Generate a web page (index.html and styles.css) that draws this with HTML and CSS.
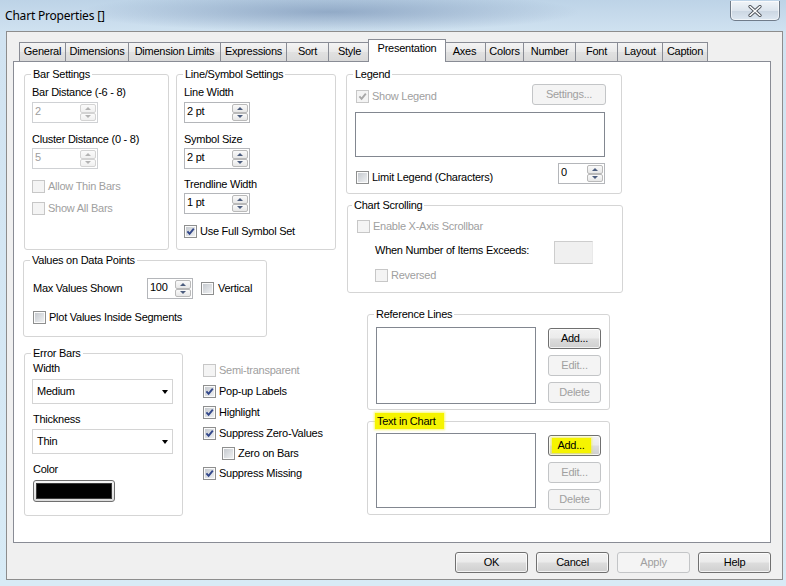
FILE: index.html
```html
<!DOCTYPE html>
<html>
<head>
<meta charset="utf-8">
<title>Chart Properties</title>
<link rel="stylesheet" href="styles.css">
</head>
<body>
<div class="window">
  <div class="titlebar">
    <span class="title">Chart Properties []</span>
    <div class="close">
      <svg width="14" height="12" viewBox="0 0 14 12"><path d="M2 1.5 L12 10.5 M12 1.5 L2 10.5" stroke="#4a4f57" stroke-width="3.2" stroke-linecap="round" fill="none"/><path d="M2 1.5 L12 10.5 M12 1.5 L2 10.5" stroke="#ffffff" stroke-width="1.6" stroke-linecap="round" fill="none"/></svg>
    </div>
  </div>
  <div class="client">
    <div class="tabs">
      <div class="tab t-general">General</div>
      <div class="tab t-dimensions">Dimensions</div>
      <div class="tab t-limits">Dimension Limits</div>
      <div class="tab t-expressions">Expressions</div>
      <div class="tab t-sort">Sort</div>
      <div class="tab t-style">Style</div>
      <div class="tab active">Presentation</div>
      <div class="tab t-axes">Axes</div>
      <div class="tab t-colors">Colors</div>
      <div class="tab t-number">Number</div>
      <div class="tab t-font">Font</div>
      <div class="tab t-layout">Layout</div>
      <div class="tab t-caption">Caption</div>
    </div>
    <div class="panel">
      <div class="col-left">
        <div class="row-top">
          <div class="group g-bar">
            <div class="gtitle">Bar Settings</div>
            <div class="lbl first">Bar Distance (-6 - 8)</div>
            <div class="spin dis w66 s-first"><span class="val">2</span><span class="arr"><i class="up"></i><i class="dn"></i></span></div>
            <div class="lbl second">Cluster Distance (0 - 8)</div>
            <div class="spin dis w66 s-next"><span class="val">5</span><span class="arr"><i class="up"></i><i class="dn"></i></span></div>
            <div class="cb dis after-spin"><span class="box"></span>Allow Thin Bars</div>
            <div class="cb dis next-cb"><span class="box"></span>Show All Bars</div>
          </div>
          <div class="group g-line">
            <div class="gtitle">Line/Symbol Settings</div>
            <div class="lbl first">Line Width</div>
            <div class="spin w66 s-first"><span class="val">2 pt</span><span class="arr"><i class="up"></i><i class="dn"></i></span></div>
            <div class="lbl second">Symbol Size</div>
            <div class="spin w66 s-next"><span class="val">2 pt</span><span class="arr"><i class="up"></i><i class="dn"></i></span></div>
            <div class="lbl third">Trendline Width</div>
            <div class="spin w66 s-next"><span class="val">1 pt</span><span class="arr"><i class="up"></i><i class="dn"></i></span></div>
            <div class="cb after-spin"><span class="box"><svg viewBox="0 0 9 9"><path d="M1.4 4.3 L3.6 6.8 L7.8 1.6" /></svg></span>Use Full Symbol Set</div>
          </div>
        </div>
        <div class="group g-values">
          <div class="gtitle">Values on Data Points</div>
          <div class="max-row">
            <span class="max-lbl">Max Values Shown</span>
            <div class="spin w46"><span class="val">100</span><span class="arr"><i class="up"></i><i class="dn"></i></span></div>
            <div class="cb vert"><span class="box"></span>Vertical</div>
          </div>
          <div class="cb plot"><span class="box"></span>Plot Values Inside Segments</div>
        </div>
        <div class="row-bottom">
          <div class="group g-error">
            <div class="gtitle">Error Bars</div>
            <div class="lbl e-width">Width</div>
            <div class="combo c-first">Medium</div>
            <div class="lbl e-next">Thickness</div>
            <div class="combo c-next">Thin</div>
            <div class="lbl e-next">Color</div>
            <div class="colorbtn"><span></span></div>
          </div>
          <div class="checklist">
            <div class="cb dis"><span class="box"></span>Semi-transparent</div>
            <div class="cb"><span class="box"><svg viewBox="0 0 9 9"><path d="M1.4 4.3 L3.6 6.8 L7.8 1.6" /></svg></span>Pop-up Labels</div>
            <div class="cb"><span class="box"><svg viewBox="0 0 9 9"><path d="M1.4 4.3 L3.6 6.8 L7.8 1.6" /></svg></span>Highlight</div>
            <div class="cb"><span class="box"><svg viewBox="0 0 9 9"><path d="M1.4 4.3 L3.6 6.8 L7.8 1.6" /></svg></span>Suppress Zero-Values</div>
            <div class="cb indent"><span class="box"></span>Zero on Bars</div>
            <div class="cb"><span class="box"><svg viewBox="0 0 9 9"><path d="M1.4 4.3 L3.6 6.8 L7.8 1.6" /></svg></span>Suppress Missing</div>
          </div>
        </div>
      </div>
      <div class="col-right">
        <div class="group g-legend">
          <div class="gtitle">Legend</div>
          <div class="legend-top">
            <div class="cb dis show-legend"><span class="box"><svg viewBox="0 0 9 9"><path d="M1.4 4.3 L3.6 6.8 L7.8 1.6" /></svg></span>Show Legend</div>
            <button class="btn dis settings">Settings...</button>
          </div>
          <div class="listbox legend-list"></div>
          <div class="legend-bottom">
            <div class="cb limit"><span class="box"></span>Limit Legend (Characters)</div>
            <div class="spin w47"><span class="val">0</span><span class="arr"><i class="up"></i><i class="dn"></i></span></div>
          </div>
        </div>
        <div class="group g-scroll">
          <div class="gtitle">Chart Scrolling</div>
          <div class="cb dis enable-scroll"><span class="box"></span>Enable X-Axis Scrollbar</div>
          <div class="items-row">
            <span class="items-lbl">When Number of Items Exceeds:</span>
            <div class="textbox dis"></div>
          </div>
          <div class="cb dis reversed"><span class="box"></span>Reversed</div>
        </div>
        <div class="group g-ref">
          <div class="gtitle">Reference Lines</div>
          <div class="list-row">
            <div class="listbox ref-list"></div>
            <div class="btncol">
              <button class="btn">Add...</button>
              <button class="btn dis">Edit...</button>
              <button class="btn dis">Delete</button>
            </div>
          </div>
        </div>
        <div class="group g-text">
          <div class="gtitle marked">Text in Chart</div>
          <div class="list-row">
            <div class="listbox text-list"></div>
            <div class="btncol">
              <button class="btn"><span class="hl">Add...</span></button>
              <button class="btn dis">Edit...</button>
              <button class="btn dis">Delete</button>
            </div>
          </div>
        </div>
      </div>
    </div>
    <div class="dlg-buttons">
      <button class="btn dlg">OK</button>
      <button class="btn dlg">Cancel</button>
      <button class="btn dlg dis">Apply</button>
      <button class="btn dlg">Help</button>
    </div>
  </div>
</div>
</body>
</html>
```

FILE: styles.css
```css
* { box-sizing: border-box; }
html, body { margin: 0; padding: 0; }
body {
  width: 786px;
  height: 586px;
  overflow: hidden;
  font-family: "Liberation Sans", Arial, sans-serif;
  font-size: 11px;
  letter-spacing: -0.25px;
  color: #000;
}

.window {
  width: 786px;
  height: 586px;
  display: flex;
  flex-direction: column;
  background:
    radial-gradient(ellipse 250px 20px at 330px 12px, rgba(70, 100, 145, 0.40), rgba(70, 100, 145, 0) 100%),
    radial-gradient(ellipse 90px 14px at 930px 14px, rgba(70, 100, 145, 0.3), rgba(70, 100, 145, 0) 100%),
    linear-gradient(#bdd3e7, #d1e3f1 34px, #d8ebf6 100%);
}

/* title bar */
.titlebar {
  height: 31px;
  display: flex;
  justify-content: space-between;
  align-items: flex-start;
  padding: 0 6px 0 5px;
}
.title {
  font-family: "Noto Sans", "Liberation Sans", sans-serif;
  font-size: 12px;
  letter-spacing: -0.2px;
  line-height: 14px;
  margin-top: 9px;
  color: #000;
}
.close {
  width: 50px;
  height: 20px;
  margin-top: 1px;
  border: 1px solid #707c8a;
  border-top: none;
  border-radius: 0 0 5px 5px;
  background: linear-gradient(#f0f4f8, #dde5ee 50%, #cbd6e2 52%, #dde7f1);
  box-shadow: inset 0 0 0 1px rgba(255, 255, 255, 0.6);
  display: flex;
  align-items: center;
  justify-content: center;
}
.close svg { display: block; }

/* client area */
.client {
  width: 777px;
  height: 549px;
  margin-left: 6px;
  border: 1px solid #8d8d8d;
  background: #f0f0f0;
  display: flex;
  flex-direction: column;
}

.tabs {
  height: 29px;
  display: flex;
  align-items: flex-end;
  padding-left: 13px;
}
.tab {
  height: 19px;
  margin-left: -1px;
  padding: 2px 0 0;
  line-height: 13px;
  text-align: center;
  border: 1px solid #898c95;
  border-bottom: none;
  background: linear-gradient(#f4f4f4, #e9e9e9 50%, #e1e1e1 51%, #d9d9d9);
  white-space: nowrap;
}
.t-general { width: 47px; }
.t-dimensions { width: 64px; }
.t-limits { width: 93px; }
.t-expressions { width: 67px; }
.t-sort { width: 43px; }
.t-style { width: 43px; }
.t-axes { width: 43px; }
.t-colors { width: 39px; }
.t-number { width: 53px; }
.t-font { width: 43px; }
.t-layout { width: 46px; }
.t-caption { width: 46px; }
.tab.active {
  width: 78px;
  height: 23px;
  margin: 0 -2px -1px -3px;
  background: #fff;
  position: relative;
  z-index: 1;
}

.panel {
  width: 758px;
  height: 482px;
  margin-left: 6px;
  background: #fff;
  border: 1px solid #898c95;
  display: flex;
  padding: 12px 0 0 10px;
}

.col-left {
  width: 312px;
  display: flex;
  flex-direction: column;
}
.col-right {
  width: 277px;
  margin-left: 10px;
  display: flex;
  flex-direction: column;
}

/* group boxes */
.group {
  --pl: 8px;
  border: 1px solid #d5d5d5;
  border-radius: 3px;
  display: flex;
  flex-direction: column;
  align-items: flex-start;
  padding-left: var(--pl);
}
.gtitle {
  margin: -7px 0 0 calc(6px - var(--pl));
  padding: 0 2px;
  line-height: 13px;
  background: #fff;
  white-space: nowrap;
}
.g-scroll .gtitle { margin-left: calc(4px - var(--pl)); }
.gtitle.marked {
  margin-top: -9px;
  margin-left: calc(7px - var(--pl));
  padding: 2px 8px 1px 2px;
  background: #f6f400;
  box-shadow: 0 0 2px 1px rgba(246, 244, 0, 0.55);
}

.lbl { line-height: 13px; white-space: nowrap; }

.row-top { display: flex; gap: 7px; }
.g-bar { --pl: 7px; width: 145px; height: 176px; }
.g-line { --pl: 7px; width: 160px; height: 176px; }
.lbl.first { margin-top: 5px; }
.lbl.second { margin-top: 10px; }
.lbl.third { margin-top: 9px; }
.spin.s-first { margin-top: 3px; }
.spin.s-next { margin-top: 2px; }
.cb.after-spin { margin-top: 11px; }
.cb.next-cb { margin-top: 9px; }

.g-values {
  --pl: 9px;
  width: 244px;
  height: 77px;
  margin: 10px 0 0 -1px;
}
.max-row {
  display: flex;
  align-items: center;
  margin-top: 11px;
}
.max-lbl { width: 114px; line-height: 13px; }
.cb.vert { margin-left: 8px; gap: 4px; }
.cb.plot { margin-top: 12px; }

.row-bottom {
  display: flex;
  align-items: flex-start;
  margin-top: 16px;
}
.g-error {
  --pl: 8px;
  width: 159px;
  height: 163px;
}
.lbl.e-width { margin-top: 2px; }
.lbl.e-next { margin-top: 9px; }
.combo.c-first { margin-top: 4px; }
.combo.c-next { margin-top: 3px; }

.checklist {
  margin-left: 20px;
  padding-top: 11px;
  display: flex;
  flex-direction: column;
  gap: 8px;
}
.cb.indent { margin-left: 19px; margin-top: -1px; margin-bottom: -1px; }

.g-legend {
  --pl: 8px;
  width: 276px;
  height: 120px;
  padding-right: 16px;
  align-items: stretch;
}
.g-legend .gtitle { align-self: flex-start; }
.legend-top {
  display: flex;
  justify-content: space-between;
  align-items: flex-start;
  margin-top: 3px;
}
.cb.show-legend { margin: 6px 0 0 1px; }
.btn.settings { width: 74px; height: 21px; margin-right: -1px; }
.legend-list { height: 45px; margin-top: 7px; }
.legend-bottom {
  display: flex;
  justify-content: space-between;
  align-items: flex-start;
  margin-top: 6px;
}
.cb.limit { margin: 8px 0 0 1px; }

.g-scroll {
  --pl: 9px;
  width: 276px;
  height: 88px;
  margin: 11px 0 0 1px;
}
.cb.enable-scroll { margin-top: 8px; }
.items-row {
  display: flex;
  align-items: flex-start;
  margin: 8px 0 0 18px;
}
.items-lbl { width: 179px; line-height: 13px; margin-top: 3px; }
.textbox {
  width: 39px;
  height: 23px;
  border: 1px solid #cdcdcd;
  border-right-color: #e9e9e9;
  background: #f0f0f0;
}
.cb.reversed { margin: 5px 0 0 18px; }

.g-ref {
  --pl: 8px;
  width: 243px;
  height: 96px;
  margin: 21px 0 0 21px;
}
.g-text {
  --pl: 8px;
  width: 243px;
  height: 94px;
  margin: 11px 0 0 21px;
}
.list-row {
  display: flex;
  align-items: flex-start;
  margin-top: 6px;
}
.g-text .list-row { margin-top: 4px; }
.ref-list { width: 160px; height: 77px; }
.text-list { width: 160px; height: 75px; }
.btncol {
  margin: 1px 0 0 12px;
  display: flex;
  flex-direction: column;
  gap: 6px;
}
.g-text .btncol { margin-top: 2px; }
.btncol .btn { width: 53px; height: 21px; }
.hl {
  background: #f6f400;
  padding: 1px 6px 1px 5px;
  margin-left: -6px;
  box-shadow: 0 0 2px 1px rgba(246, 244, 0, 0.5);
}

/* controls */
.cb {
  display: flex;
  align-items: center;
  gap: 3px;
  line-height: 13px;
  white-space: nowrap;
}
.box {
  flex: none;
  width: 13px;
  height: 13px;
  border: 1px solid #8e8f8f;
  padding: 1px;
  background: linear-gradient(135deg, #c6cacf, #eef0f2) content-box, #fbfbfb;
}
.box svg {
  display: block;
  width: 9px;
  height: 9px;
}
.box svg path {
  fill: none;
  stroke: #32478a;
  stroke-width: 1.9;
}
.cb.dis { color: #a0a0a0; }
.cb.dis .box {
  border-color: #c7c7c7;
  background: #f4f4f4;
}
.cb.dis .box svg path { stroke: #a8a8a8; }

.spin {
  display: flex;
  height: 21px;
  border: 1px solid #b4b6ba;
  background: #fff;
}
.spin.w66 { width: 66px; }
.spin.w46 { width: 46px; }
.spin.w47 { width: 47px; }
.spin .val {
  flex: 1;
  padding: 2px 0 0 2px;
  line-height: 13px;
}
.spin .arr {
  width: 17px;
  display: flex;
  flex-direction: column;
  padding: 1px 1px 1px 0;
}
.spin .arr i {
  flex: 1;
  border: 1px solid #b9b9b9;
  border-radius: 2px;
  background: linear-gradient(#fafafa, #e7e7e7);
  display: flex;
  align-items: center;
  justify-content: center;
}
.spin .arr i::after {
  content: "";
  border-left: 3px solid transparent;
  border-right: 3px solid transparent;
}
.spin .arr i.up::after { border-bottom: 3px solid #4c5d7e; }
.spin .arr i.dn::after { border-top: 3px solid #4c5d7e; }
.spin.dis { border-color: #cfd1d4; color: #9d9d9d; }
.spin.dis .arr i { border-color: #d3d3d3; background: linear-gradient(#fbfbfb, #f0f0f0); }
.spin.dis .arr i.up::after { border-bottom-color: #b3b3b3; }
.spin.dis .arr i.dn::after { border-top-color: #b3b3b3; }

.combo {
  width: 141px;
  height: 25px;
  margin-left: -1px;
  border: 1px solid #d4d4d4;
  background: #fff;
  display: flex;
  align-items: center;
  justify-content: space-between;
  padding: 0 4px 0 4px;
  line-height: 13px;
}
.combo::after {
  content: "";
  border-left: 3.5px solid transparent;
  border-right: 3.5px solid transparent;
  border-top: 4px solid #000;
}

.colorbtn {
  width: 82px;
  height: 22px;
  margin-top: 4px;
  border: 1px solid #6f6f6f;
  border-radius: 3px;
  padding: 2px;
  background: linear-gradient(#f4f4f4, #dcdcdc);
}
.colorbtn span {
  display: block;
  height: 100%;
  background: #000;
  border: 1px solid #3a3a3a;
}

.listbox {
  border: 1px solid #828790;
  background: #fff;
}

.btn {
  font: inherit;
  letter-spacing: inherit;
  color: #000;
  padding: 0;
  margin: 0;
  height: 21px;
  border: 1px solid #707070;
  border-radius: 3px;
  background: linear-gradient(#f2f2f2, #ebebeb 48%, #dddddd 52%, #cfcfcf);
  box-shadow: inset 0 0 0 1px rgba(255, 255, 255, 0.75);
  display: flex;
  align-items: center;
  justify-content: center;
  line-height: 13px;
}
.btn.dis {
  color: #a0a0a0;
  border-color: #c3c5c7;
  background: #f4f4f4;
  box-shadow: none;
}

.dlg-buttons {
  display: flex;
  justify-content: flex-end;
  gap: 8px;
  margin-top: 9px;
  padding-right: 11px;
}
.btn.dlg { width: 73px; }
```
